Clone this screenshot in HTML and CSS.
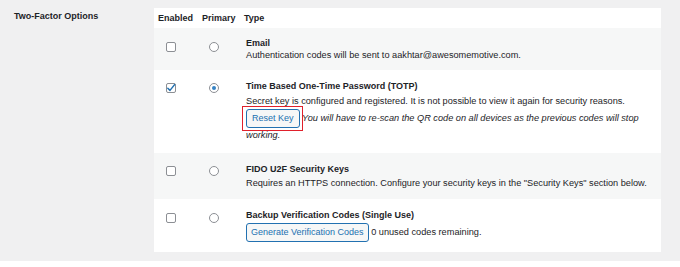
FILE: index.html
```html
<!DOCTYPE html>
<html lang="en">
<head>
    <meta charset="UTF-8">
    <meta name="viewport" content="width=device-width, initial-scale=1.0">
    <title>Two-Factor Options</title>
    <link rel="stylesheet" href="styles.css">
</head>
<body>
    <div class="settings">
        <div class="settings-label">Two-Factor Options</div>

        <div class="options-panel">
            <div class="option-row head-row">
                <div class="head-cell">Enabled</div>
                <div class="head-cell">Primary</div>
                <div class="head-cell">Type</div>
            </div>

            <!-- Email -->
            <div class="option-row alt first">
                <div class="col-enabled"><span class="checkbox"></span></div>
                <div class="col-primary"><span class="radio"></span></div>
                <div class="col-type">
                    <div class="type-title">Email</div>
                    <div class="type-desc">Authentication codes will be sent to aakhtar@awesomemotive.com.</div>
                </div>
            </div>

            <!-- TOTP -->
            <div class="option-row totp">
                <div class="col-enabled">
                    <span class="checkbox checked">
                        <svg width="10" height="10" viewBox="0 0 10 10"><path d="M1.8 5.2 L4 7.4 L8.6 1.6" fill="none" stroke="#2271b1" stroke-width="1.5" stroke-linecap="round" stroke-linejoin="round"/></svg>
                    </span>
                </div>
                <div class="col-primary"><span class="radio checked"></span></div>
                <div class="col-type">
                    <div class="type-title">Time Based One-Time Password (TOTP)</div>
                    <div class="type-desc secret">Secret key is configured and registered. It is not possible to view it again for security reasons.</div>
                    <div class="type-desc reset-line"><button class="btn btn-marked">Reset Key</button> <em>You will have to re-scan the QR code on all devices as the previous codes will stop working.</em></div>
                </div>
            </div>

            <!-- FIDO -->
            <div class="option-row alt">
                <div class="col-enabled"><span class="checkbox"></span></div>
                <div class="col-primary"><span class="radio"></span></div>
                <div class="col-type">
                    <div class="type-title">FIDO U2F Security Keys</div>
                    <div class="type-desc">Requires an HTTPS connection. Configure your security keys in the "Security Keys" section below.</div>
                </div>
            </div>

            <!-- Backup codes -->
            <div class="option-row last">
                <div class="col-enabled"><span class="checkbox"></span></div>
                <div class="col-primary"><span class="radio"></span></div>
                <div class="col-type">
                    <div class="type-title">Backup Verification Codes (Single Use)</div>
                    <div class="type-desc backup-line"><button class="btn">Generate Verification Codes</button> 0 unused codes remaining.</div>
                </div>
            </div>
        </div>
    </div>
</body>
</html>
```

FILE: styles.css
```css
* {
    margin: 0;
    padding: 0;
    box-sizing: border-box;
}

body {
    font-family: "Liberation Sans", Arial, sans-serif;
    font-size: 9.2px;
    color: #1d2327;
    background: #fff;
}

/* Settings row */
.settings {
    background: #f0f0f1;
    display: flex;
    padding: 8px 19px 9px 14px;
}

.settings-label {
    width: 140px;
    font-size: 9px;
    font-weight: bold;
    line-height: 12px;
    padding-top: 2px;
}

.options-panel {
    flex: 1;
    background: #fff;
}

/* Option rows */
.option-row {
    display: grid;
    grid-template-columns: 44px 42px 1fr;
}

.option-row.alt {
    background: #f6f7f7;
}

.head-row {
    font-size: 9px;
    font-weight: bold;
    line-height: 12px;
    padding: 4px 0;
}

.head-cell {
    padding-left: 4px;
    white-space: nowrap;
}

.col-enabled .checkbox {
    margin: 13px 0 0 12px;
}

.col-primary .radio {
    margin: 13px 0 0 11px;
}

.first .checkbox,
.first .radio,
.last .checkbox,
.last .radio {
    margin-top: 14px;
}

.col-type {
    padding: 10px 8px 10px 6px;
    line-height: 12px;
}

.first .col-type {
    padding-top: 9px;
    padding-bottom: 9px;
}

.type-title {
    font-size: 9px;
    font-weight: bold;
}

.type-desc {
    margin-top: 2px;
}

.first .type-desc {
    margin-top: 0;
}

.secret {
    margin-top: 3px;
}

.reset-line {
    line-height: 15px;
    margin-top: 2px;
}

.backup-line {
    margin-top: 2px;
}

/* Form controls */
.checkbox {
    display: block;
    width: 10px;
    height: 10px;
    border: 1px solid #8c8f94;
    border-radius: 2px;
    background: #fff;
    position: relative;
}

.checkbox svg {
    position: absolute;
    top: -1px;
    left: -1px;
}

.radio {
    display: block;
    width: 10px;
    height: 10px;
    border: 1px solid #8c8f94;
    border-radius: 50%;
    background: #fff;
    position: relative;
}

.radio.checked::after {
    content: "";
    position: absolute;
    top: 2px;
    left: 2px;
    width: 4px;
    height: 4px;
    border-radius: 50%;
    background: #3582c4;
}

/* Buttons */
.btn {
    display: inline-block;
    height: 19px;
    padding: 0 4px;
    font-family: inherit;
    font-size: 9px;
    line-height: 17px;
    color: #2271b1;
    background: #f6f7f7;
    border: 1px solid #2271b1;
    border-radius: 3px;
    vertical-align: middle;
    cursor: pointer;
}

.btn-marked {
    position: relative;
    padding: 0 5px;
}

.btn-marked::after {
    content: "";
    position: absolute;
    top: -4px;
    bottom: -4px;
    left: -5px;
    right: -4px;
    border: 1px solid #e0202b;
}
```
